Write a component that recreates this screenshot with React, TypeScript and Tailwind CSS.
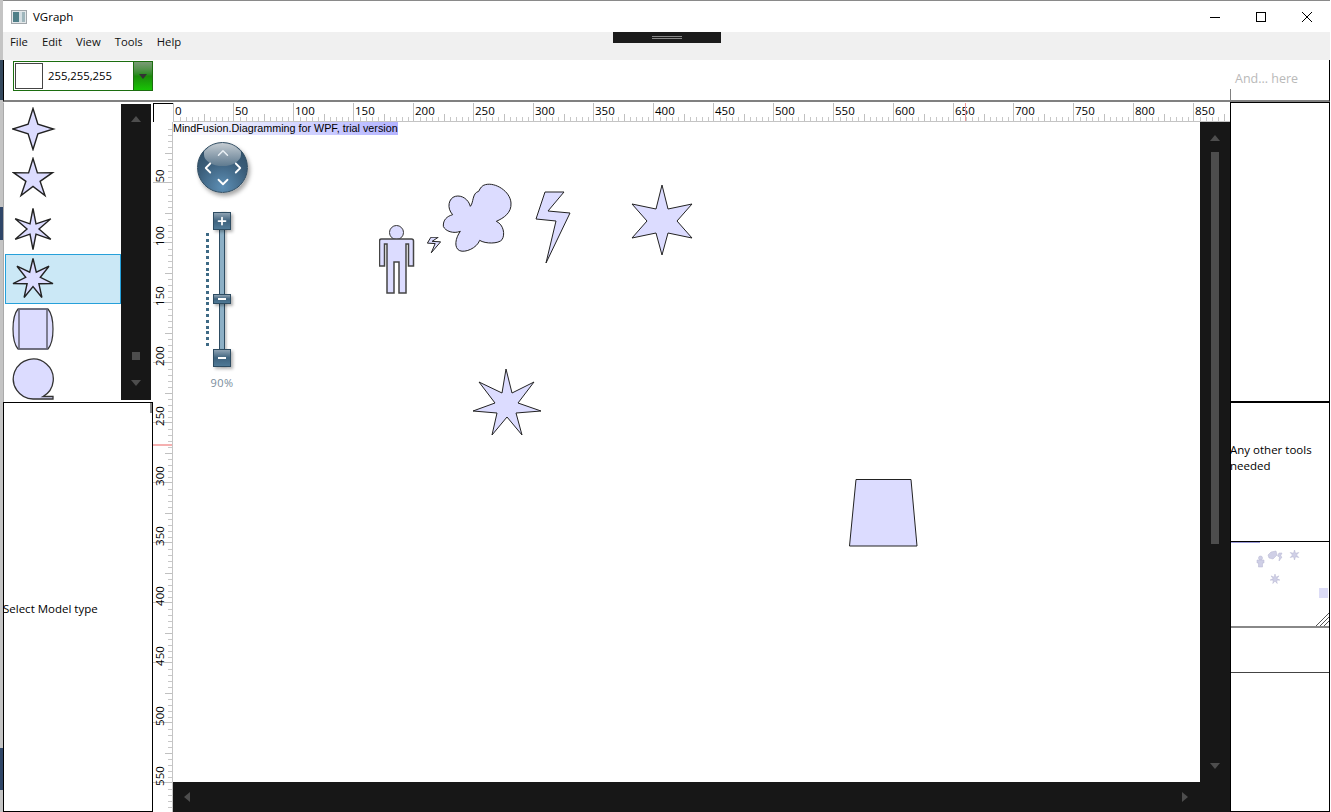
import React from 'react';
import { ChevronUp, ChevronDown, ChevronLeft, ChevronRight, Plus } from 'lucide-react';

const FILL = '#dcdcff';

const starPoints = (cx: number, cy: number, n: number, r: number, inner: number) => {
  const pts: string[] = [];
  for (let i = 0; i < n * 2; i++) {
    const rad = i % 2 === 0 ? r : inner;
    const a = (Math.PI * i) / n - Math.PI / 2;
    pts.push(`${(cx + rad * Math.cos(a)).toFixed(1)},${(cy + rad * Math.sin(a)).toFixed(1)}`);
  }
  return pts.join(' ');
};

const Star = ({ n, inner }: { n: number; inner: number }) => (
  <svg width="44" height="44" viewBox="0 0 44 44">
    <polygon points={starPoints(21, 22, n, 20.5, inner)} fill={FILL} stroke="#222" strokeWidth="1.4" />
  </svg>
);

const PaletteDrum = () => (
  <svg width="44" height="44" viewBox="0 0 44 44">
    <path d="M6 2H36Q41 8 41 22T36 42H6Q1 36 1 22T6 2Z" fill={FILL} stroke="#333" strokeWidth="1.2" />
    <path d="M7 2V42M35 2V42M6 2H36M6 42H36" stroke="#666677" strokeWidth="1.6" />
  </svg>
);

const PaletteTape = () => (
  <svg width="44" height="44" viewBox="0 0 44 44">
    <path d="M21 42H41V39.5H31A20 20 0 1 0 21 42Z" fill={FILL} stroke="#333" strokeWidth="1.3" />
  </svg>
);

const palette = [
  <Star n={4} inner={7} />,
  <Star n={5} inner={7.5} />,
  <Star n={6} inner={6} />,
  <Star n={7} inner={7.5} />,
  <PaletteDrum />,
  <PaletteTape />,
];

const ScrollArrow = ({ dir }: { dir: 'up' | 'down' | 'left' | 'right' }) => {
  const pts = { up: '0,9 5,3 10,9', down: '0,3 5,9 10,3', left: '8,1 2,6 8,11', right: '3,1 9,6 3,11' }[dir];
  return (
    <svg width="10" height="12" viewBox="0 0 10 12">
      <polygon points={pts} fill="#4d4d4d" />
    </svg>
  );
};

const majorsX = Array.from({ length: 18 }, (_, i) => i * 50);
const majorsY = Array.from({ length: 12 }, (_, i) => i * 50);
const ticks = [6, 12, 18, 24, 30, 36, 42, 48, 54];

const RulerTop = () => (
  <div className="relative flex h-[19px] overflow-hidden border-b border-[#c4c4c4] bg-white">
    {majorsX.map(v => (
      <div key={v} className="relative w-[60px] shrink-0 border-l border-[#c0c0c0]">
        <span className="absolute left-[1px] top-0 text-[11.5px] leading-[16px] text-black">{v}</span>
        {ticks.map(t => (
          <span
            key={t}
            className={t === 30 ? 'absolute bottom-0 h-[7px] w-px bg-[#c0c0c0]' : 'absolute bottom-0 h-[4px] w-px bg-[#c8c8c8]'}
            style={{ left: t }}
          />
        ))}
      </div>
    ))}
    <span className="absolute left-[792px] top-0 h-full w-px bg-[#f09a9a]" />
  </div>
);

const RulerLeft = () => (
  <div className="relative w-5 shrink-0 overflow-hidden border-r border-[#c4c4c4] bg-white">
    <div className="h-px" />
    {majorsY.map(v => (
      <div key={v} className="relative h-[60px] w-5 border-b border-[#c0c0c0]">
        {v > 0 && (
          <span className="absolute left-[-5px] top-[-14px] w-6 -rotate-90 text-center text-[11.5px] leading-[14px] text-black">
            {v}
          </span>
        )}
        {ticks.map(t => (
          <span
            key={t}
            className={t === 30 ? 'absolute right-0 h-px w-[8px] bg-[#c0c0c0]' : 'absolute right-0 h-px w-[5px] bg-[#c8c8c8]'}
            style={{ top: t }}
          />
        ))}
      </div>
    ))}
    <span className="absolute left-0 top-[322px] h-[2px] w-full bg-[#f5b0b0]" />
  </div>
);

const Person = () => (
  <svg className="absolute left-[206px] top-[103px]" width="36" height="70" viewBox="0 0 36 70">
    <circle cx="17.5" cy="7.5" r="7" fill={FILL} stroke="#333" strokeWidth="1" />
    <path
      d="M2.5 14H32.5Q34.5 14 34.5 16V41H29.5V19H27V68H20V37H15V68H8V19H5.5V41H0.5V16Q0.5 14 2.5 14Z"
      fill={FILL}
      stroke="#444"
      strokeWidth="1.5"
    />
  </svg>
);

const Bolt = ({ className, w, h }: { className: string; w: number; h: number }) => (
  <svg className={className} width={w} height={h} viewBox="0 0 36 73" preserveAspectRatio="none">
    <polygon
      points="10,1 29,1 13,20 35,22 11,72 21,30 1,28"
      fill={FILL}
      stroke="#222"
      strokeWidth="1"
      vectorEffect="non-scaling-stroke"
    />
  </svg>
);

const Cloud = () => (
  <svg className="absolute left-[269px] top-[60px]" width="70" height="72" viewBox="215 22 210 216">
    <path
      d="M345 30C375 22 420 50 422 85C424 115 400 130 378 140C400 150 405 180 395 195C385 208 345 208 328 197C320 220 285 235 268 228C250 220 255 190 270 170C250 178 225 170 219 155C218 135 230 125 247 120C228 100 235 70 255 65C275 60 295 75 300 95C310 85 305 55 325 50C330 40 335 32 345 30Z"
      fill={FILL}
      stroke="#222"
      strokeWidth="3"
    />
  </svg>
);

const NavDisc = () => (
  <div className="absolute left-[24px] top-[20px] h-[51px] w-[51px] overflow-hidden rounded-full border border-[#2f4b60] bg-[radial-gradient(circle_at_50%_90%,#5d8fb5,#3a5c78_55%,#2c4a61)] shadow-[2px_3px_4px_rgba(0,0,0,0.35)]">
    <div className="absolute left-[6px] top-0 h-[23px] w-[37px] rounded-b-[50%] bg-gradient-to-b from-[#c5ccd2] to-[#5f7b90]" />
    <ChevronUp size={18} strokeWidth={2} className="absolute left-[16px] top-[1px] text-[#e8eef3]" />
    <ChevronDown size={18} strokeWidth={2.4} className="absolute left-[16px] top-[30px] text-white" />
    <ChevronLeft size={18} strokeWidth={2.4} className="absolute left-[1px] top-[16px] text-white" />
    <ChevronRight size={18} strokeWidth={2.4} className="absolute left-[31px] top-[16px] text-white" />
  </div>
);

const ZoomBtn = ({ className, icon }: { className: string; icon: React.ReactNode }) => (
  <div
    className={`flex w-[18px] items-center justify-center border border-[#2d4c62] bg-gradient-to-b from-[#8fa3b3] via-[#3f637e] to-[#4f7996] text-white shadow-[2px_2px_3px_rgba(0,0,0,0.3)] ${className}`}
  >
    {icon}
  </div>
);

const ZoomControl = () => (
  <div className="absolute left-[33px] top-[90px] flex w-[32px] flex-col items-center">
    <div className="relative flex h-[155px] w-[18px] flex-col items-center justify-between">
      <div className="absolute left-[6px] top-0 h-full w-[6px] border-x border-[#2d4c62] bg-[#8db0c6] shadow-[2px_0_2px_rgba(0,0,0,0.2)]" />
      <ZoomBtn className="relative h-[18px]" icon={<Plus size={12} strokeWidth={3.5} />} />
      <ZoomBtn className="relative h-[18px]" icon={<span className="h-[2px] w-2 bg-white" />} />
      <div className="absolute left-0 top-[82px]">
        <ZoomBtn className="h-[10px]" icon={<span className="h-[2px] w-2 bg-white" />} />
      </div>
      <div className="absolute left-[-7px] top-[21px] flex h-[113px] flex-col justify-between">
        {Array.from({ length: 20 }, (_, i) => (
          <span key={i} className="h-[3px] w-[3px] bg-[#3e6a85]" />
        ))}
      </div>
    </div>
    <span className="mt-[9px] text-[11px] leading-[14px] tracking-[0.4px] text-[#7a8d9b]">90%</span>
  </div>
);

const Overview = () => (
  <div className="relative h-[86px] overflow-hidden border-b-2 border-[#888]">
    <div className="absolute left-0 top-0 h-px w-[29px] bg-[#9a9ad8]" />
    <svg className="absolute left-0 top-0" width="100" height="84" viewBox="0 0 100 84">
      <g fill="#cfcfe6" stroke="#b4b4d0" strokeWidth="0.5">
        <circle cx="29.5" cy="16" r="2" />
        <path d="M26 18H33V21H31.5V25H27.5V21H26Z" />
        <path d="M37 13L40 10L45 9L46 13L42 17L38 16Z" />
        <path d="M48 11H51L49.5 14L51 15L48 19L48.5 15L46.5 14Z" />
        <polygon points={starPoints(63.5, 13, 6, 5, 2)} />
        <polygon points={starPoints(44, 37, 7, 5, 2)} />
      </g>
      <rect x="88" y="46" width="9" height="10" fill="#dcdcf6" />
    </svg>
    <svg className="absolute bottom-0 right-0" width="13" height="13" viewBox="0 0 13 13">
      <path d="M0 13L13 0M4 13L13 4M8 13L13 8" stroke="#555" strokeWidth="1" />
    </svg>
  </div>
);

export default function App() {
  return (
    <div
      className="flex h-[812px] w-[1331px] overflow-hidden bg-white text-[11.3px] text-black"
      style={{ fontFamily: '"Open Sans", "Noto Sans", sans-serif' }}
    >
      {/* bit of desktop behind the window */}
      <div className="flex w-[3px] shrink-0 flex-col bg-[#c4c4c4]">
        <div className="mt-[60px] h-[40px] bg-[#34495e]" />
        <div className="mt-[107px] h-[33px] bg-[#2f4668]" />
        <div className="mt-[508px] h-[42px] bg-[#2f4668]" />
      </div>

      <div className="flex min-w-0 flex-1 flex-col pr-px">
        {/* title bar */}
        <div className="flex h-8 shrink-0 items-center border-t border-[#8a8a8a] bg-white">
          <svg className="ml-[8px]" width="16" height="16" viewBox="0 0 16 16">
            <rect x="0.5" y="1.5" width="15" height="13" fill="#e4e8ea" stroke="#a0a6aa" />
            <rect x="2" y="3" width="6" height="10" fill="#4f7f88" />
            <rect x="8" y="3" width="3" height="10" fill="#d4dee2" />
            <rect x="11" y="3" width="3" height="10" fill="#9fb6bc" />
          </svg>
          <span className="ml-[6px] text-[11.5px]">VGraph</span>
          <div className="ml-auto flex items-center">
            <div className="flex w-[46px] justify-center">
              <svg width="10" height="10" viewBox="0 0 10 10"><path d="M0 5.5H10" stroke="#000" strokeWidth="1" /></svg>
            </div>
            <div className="flex w-[46px] justify-center">
              <svg width="10" height="10" viewBox="0 0 10 10"><rect x="0.5" y="0.5" width="9" height="9" fill="none" stroke="#000" strokeWidth="1" /></svg>
            </div>
            <div className="flex w-[46px] justify-center">
              <svg width="10" height="10" viewBox="0 0 10 10"><path d="M0 0L10 10M10 0L0 10" stroke="#000" strokeWidth="1" /></svg>
            </div>
          </div>
        </div>

        {/* menu */}
        <div className="relative flex h-7 shrink-0 items-center gap-[14px] bg-[#f0f0f0] pb-[7px] pl-[7px]">
          {['File', 'Edit', 'View', 'Tools', 'Help'].map(m => (
            <span key={m} className="text-[#111]">{m}</span>
          ))}
          <div className="absolute left-[610px] top-0 flex h-[11px] w-[108px] items-center justify-center bg-[#1b1b1b]">
            <div className="h-[3px] w-[30px] border-y border-[#8a8a8a]" />
          </div>
        </div>

        {/* toolbar */}
        <div className="flex h-[42px] shrink-0 border-b-2 border-l border-r border-b-[#808080] border-l-black border-r-black">
          <div className="ml-[9px] mt-px flex h-[30px] w-[140px] border border-[#1c6e10]">
            <div className="m-px h-[26px] w-[28px] border border-[#444]" />
            <span className="ml-[4px] self-center">255,255,255</span>
            <div className="ml-auto flex w-[19px] items-center justify-center border-l border-[#1c6e10] bg-gradient-to-b from-[#7a9a76] via-[#1a8a0a] to-[#18c404]">
              <svg width="8" height="5" viewBox="0 0 8 5"><polygon points="0,0 8,0 4,5" fill="#333" /></svg>
            </div>
          </div>
          <div className="ml-auto flex w-[99px] items-end">
            <div className="flex h-full w-full flex-col justify-end">
              <span className="mb-[2px] ml-[5px] text-[12.5px] leading-[17px] text-[#b9b9b9]">And... here</span>
              <div className="h-[11px] w-px bg-[#808080]" />
            </div>
          </div>
        </div>

        {/* body */}
        <div className="flex min-h-0 flex-1">
          {/* left column */}
          <div className="flex w-[150px] shrink-0 flex-col">
            <div className="flex h-[300px] shrink-0 border-l border-t border-l-[#aaa] border-t-white">
              <div className="flex w-[117px] flex-col overflow-hidden pl-px pt-px">
                {palette.map((shape, i) => (
                  <div
                    key={i}
                    className={
                      i === 3
                        ? 'flex h-[50px] shrink-0 items-center border border-[#26a0da] bg-[#cbe8f6] pl-[6px]'
                        : 'flex h-[50px] shrink-0 items-center pl-[7px]'
                    }
                  >
                    {shape}
                  </div>
                ))}
              </div>
              <div className="relative mb-[2px] mt-px flex w-[30px] flex-col items-center justify-between bg-[#171717] pb-[11px] pt-[9px]">
                <ScrollArrow dir="up" />
                <div className="absolute bottom-[40px] h-2 w-2 bg-[#4d4d4d]" />
                <ScrollArrow dir="down" />
              </div>
            </div>
            <div className="relative flex flex-1 items-center border border-black bg-white pt-[3px] text-[11.5px]">
              <span className="-ml-px">Select Model type</span>
              <div className="absolute right-0 top-0 h-[10px] w-[2px] bg-[#888]" />
            </div>
          </div>

          {/* ruler + canvas */}
          <div className="flex min-w-0 flex-1 flex-col">
            <div className="flex h-[20px] shrink-0 pt-px">
              <div className="h-[19px] w-5 shrink-0 border-l border-t border-black bg-white" />
              <div className="min-w-0 flex-1"><RulerTop /></div>
            </div>
            <div className="flex min-h-0 flex-1">
              <RulerLeft />
              <div className="flex min-w-0 flex-1 flex-col">
                <div className="flex min-h-0 flex-1">
                  <div className="relative min-w-0 flex-1 overflow-hidden bg-white">
                    <span
                      className="absolute left-0 top-0 bg-gradient-to-r from-white to-[#b4b4ff] text-[10.75px] leading-[13px] text-black"
                      style={{ fontFamily: '"Liberation Sans", sans-serif' }}
                    >
                      MindFusion.Diagramming for WPF, trial version
                    </span>
                    <NavDisc />
                    <ZoomControl />
                    <Person />
                    <Bolt className="absolute left-[254px] top-[115px]" w={14} h={16} />
                    <Cloud />
                    <Bolt className="absolute left-[362px] top-[69px]" w={36} h={73} />
                    <svg className="absolute left-[457px] top-[62px]" width="64" height="72" viewBox="0 0 64 72">
                      <polygon
                        points="32,1 38,25 62,20 47,37 62,54 38,49 32,71 26,49 2,54 17,37 2,20 26,25"
                        fill={FILL}
                        stroke="#222"
                        strokeWidth="1"
                      />
                    </svg>
                    <svg className="absolute left-[298px] top-[246px]" width="72" height="70" viewBox="0 0 72 70">
                      <polygon
                        points="35,1 41,25 63,14 47,35 70,43 45,45 51,67 36,49 21,67 26,45 2,43 24,35 8,14 31,25"
                        fill={FILL}
                        stroke="#222"
                        strokeWidth="1"
                      />
                    </svg>
                    <svg className="absolute left-[676px] top-[357px]" width="70" height="68" viewBox="0 0 70 68">
                      <path d="M7 0.5H62L68 67H0.5Z" fill={FILL} stroke="#222" strokeWidth="1" />
                    </svg>
                  </div>
                  <div className="flex w-[30px] shrink-0 flex-col items-center bg-[#171717] py-[10px]">
                    <ScrollArrow dir="up" />
                    <div className="mt-[8px] h-[392px] w-2 bg-[#4d4d4d]" />
                    <div className="mt-auto"><ScrollArrow dir="down" /></div>
                  </div>
                </div>
                <div className="flex h-[30px] shrink-0 items-center justify-between bg-[#171717] pl-[9px] pr-[41px]">
                  <ScrollArrow dir="left" />
                  <ScrollArrow dir="right" />
                </div>
              </div>
            </div>
          </div>

          {/* right column */}
          <div className="flex w-[100px] shrink-0 flex-col border-l border-r border-black">
            <div className="h-[301px] shrink-0 border-b-2 border-t border-black" />
            <div className="h-[139px] shrink-0 border-b border-black pt-[39px] text-[11.5px] leading-[16px]">
              <p className="-ml-px">Any other tools needed</p>
            </div>
            <Overview />
            <div className="h-[45px] shrink-0 border-b border-[#444]" />
            <div className="flex-1 border-b border-black" />
          </div>
        </div>
      </div>
    </div>
  );
}
